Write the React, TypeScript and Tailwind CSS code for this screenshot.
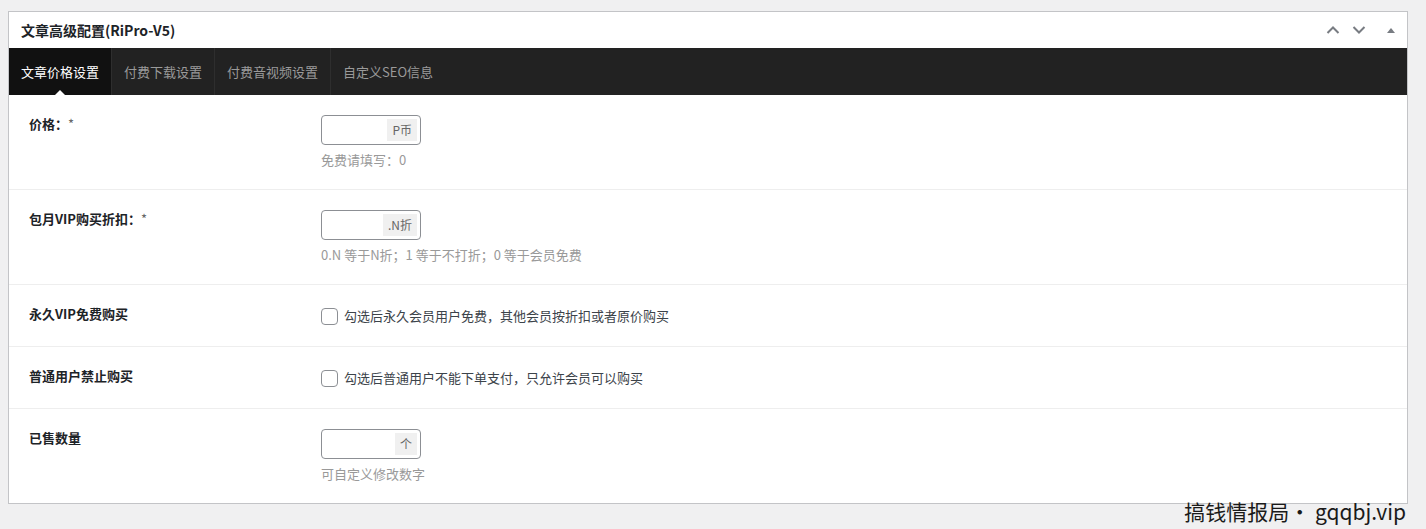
import React from "react";

const font = { fontFamily: '"Noto Sans CJK SC", "Noto Sans", sans-serif' };

const tabs = ["文章价格设置", "付费下载设置", "付费音视频设置", "自定义SEO信息"];

function NumberField({ unit, desc }: { unit: string; desc: string }) {
  return (
    <div>
      <div className="flex h-[30px] w-[100px] items-center justify-end rounded-[4px] border border-[#8c8f94] bg-white pr-[3px]">
        <span className="flex h-[22px] items-center bg-[#f0f0f0] px-[5px] text-[12px] text-[#666]">
          {unit}
        </span>
      </div>
      <p className="mt-[6px] text-[13px] leading-[18px] text-[#999]">{desc}</p>
    </div>
  );
}

function CheckField({ text }: { text: string }) {
  return (
    <label className="flex h-[21px] items-center gap-[6px] text-[13px] text-[#3c434a]">
      <span className="mt-[1px] h-[17px] w-[17px] rounded-[4px] border border-[#8c8f94] bg-white" />
      {text}
    </label>
  );
}

function Row({
  label,
  required,
  children,
  last,
}: {
  label: string;
  required?: boolean;
  children: React.ReactNode;
  last?: boolean;
}) {
  return (
    <div className={`flex px-5 py-5 ${last ? "" : "border-b border-[#eeeeee]"}`}>
      <div className="w-[292px] shrink-0 text-[13px] font-bold leading-[18px] text-[#1d2327]">
        {label}
        {required && <span className="font-normal text-[#666]">*</span>}
      </div>
      <div>{children}</div>
    </div>
  );
}

export default function App() {
  return (
    <div className="relative min-h-screen bg-[#f0f0f1] pt-[11px]" style={font}>
      <div className="ml-[8px] w-[1400px] border border-[#c3c4c7] bg-white">
        {/* header */}
        <div className="flex h-[36px] items-center justify-between pl-3 pr-[10px]">
          <h2 className="text-[14px] font-bold text-[#1d2327]">文章高级配置(RiPro-V5)</h2>
          <div className="flex items-center text-[#787c82]">
            <svg width="16" height="16" viewBox="0 0 16 16" className="mr-[10px]">
              <path d="M2.5 11 L8 5.5 L13.5 11" fill="none" stroke="currentColor" strokeWidth="2" />
            </svg>
            <svg width="16" height="16" viewBox="0 0 16 16" className="mr-[19px]">
              <path d="M2.5 5 L8 10.5 L13.5 5" fill="none" stroke="currentColor" strokeWidth="2" />
            </svg>
            <svg width="10" height="10" viewBox="0 0 10 10" className="mr-[1px]">
              <path d="M1 8 L5 3 L9 8 Z" fill="currentColor" />
            </svg>
          </div>
        </div>

        {/* tabs */}
        <div className="flex h-[47px] bg-[#222222]">
          {tabs.map((t, i) => (
            <div
              key={t}
              className={`relative flex items-center px-3 text-[13px] ${
                i === 0 ? "bg-[#111111] text-white" : "text-[#9a9a9a]"
              } ${i < tabs.length - 1 ? "border-r border-[#2e2e2e]" : ""}`}
            >
              {t}
              {i === 0 && (
                <span className="absolute bottom-0 left-1/2 -translate-x-1/2 border-x-[5px] border-b-[5px] border-x-transparent border-b-white" />
              )}
            </div>
          ))}
        </div>

        {/* fields */}
        <Row label="价格：" required>
          <NumberField unit="P币" desc="免费请填写：0" />
        </Row>
        <Row label="包月VIP购买折扣：" required>
          <NumberField unit=".N折" desc="0.N 等于N折；1 等于不打折；0 等于会员免费" />
        </Row>
        <Row label="永久VIP免费购买">
          <CheckField text="勾选后永久会员用户免费，其他会员按折扣或者原价购买" />
        </Row>
        <Row label="普通用户禁止购买">
          <CheckField text="勾选后普通用户不能下单支付，只允许会员可以购买" />
        </Row>
        <Row label="已售数量" last>
          <NumberField unit="个" desc="可自定义修改数字" />
        </Row>
      </div>

      <div className="absolute bottom-[4px] right-[20px] text-[21px] leading-[27px] text-[#1a1a1a]">
        搞钱情报局· gqqbj.vip
      </div>
    </div>
  );
}
